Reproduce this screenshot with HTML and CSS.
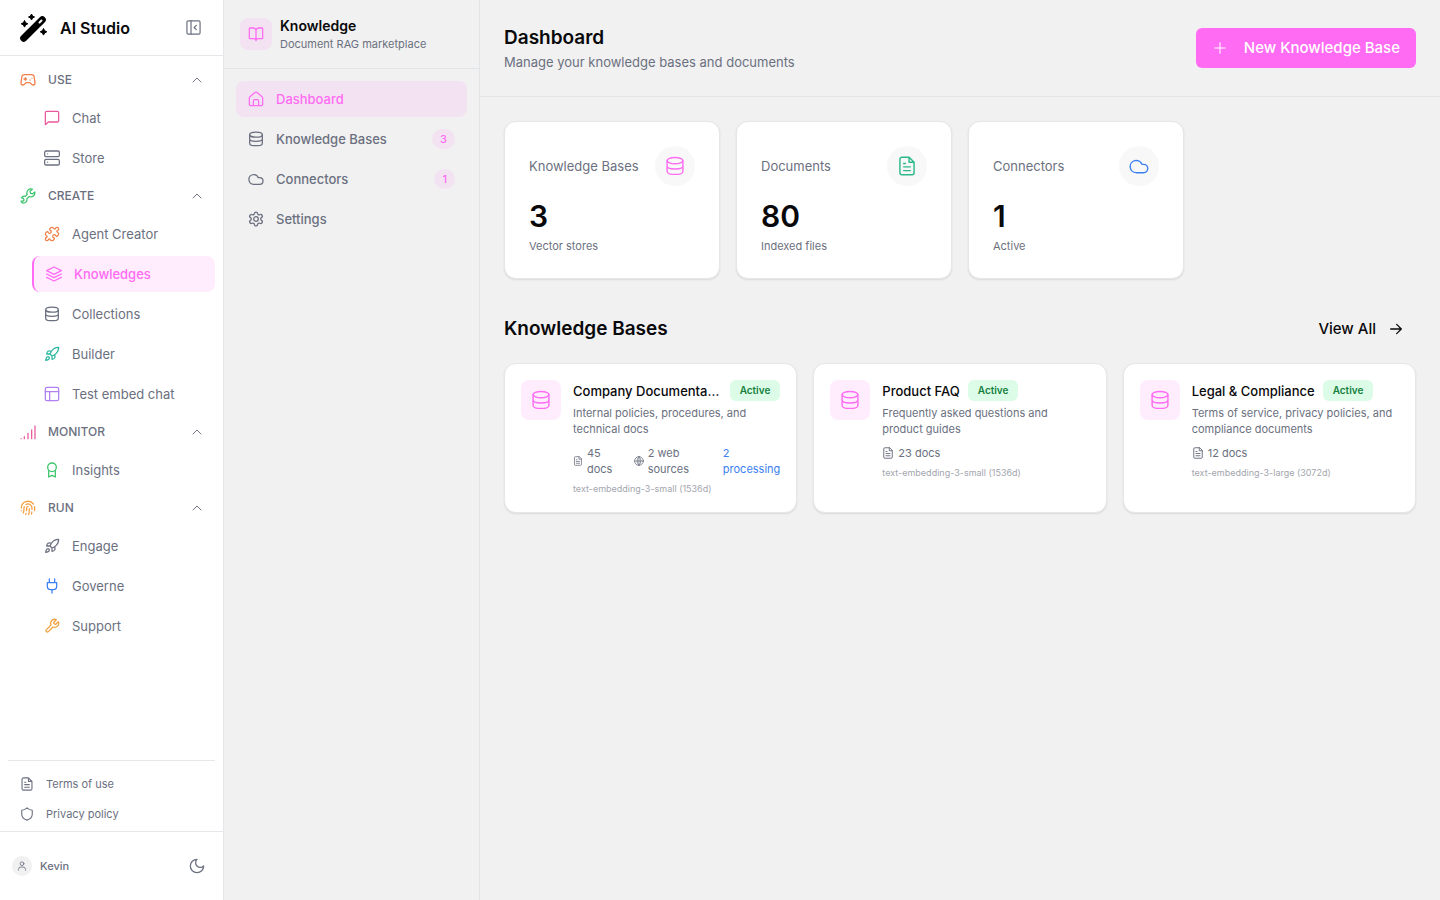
FILE: index.html
```html
<!DOCTYPE html>
<html lang="en">
<head>
    <meta charset="UTF-8">
    <meta name="viewport" content="width=device-width, initial-scale=1.0">
    <title>AI Studio - Knowledge</title>
    <link rel="stylesheet" href="styles.css">
</head>
<body>
    <svg class="sprite" aria-hidden="true">
        <symbol id="i-gamepad" viewBox="0 0 24 24"><path d="M17.32 4H6.68a4 4 0 0 0-3.978 3.59C2.604 8.416 1.5 14.456 1.5 16.5a3 3 0 0 0 3 3c1 0 1.5-.5 2-1l1.914-1.914A2 2 0 0 1 9.828 16h4.344a2 2 0 0 1 1.414.586L17.5 18.5c.5.5 1 1 2 1a3 3 0 0 0 3-3c0-2.045-1.104-8.084-1.202-8.91A4 4 0 0 0 17.32 4zM6 10.5h4M8 8.5v4M15 12h.01M18 9.5h.01"/></symbol>
        <symbol id="i-chat" viewBox="0 0 24 24"><path d="M22 16a2 2 0 0 1-2 2H6.500L2 22V4a2 2 0 0 1 2-2h16a2 2 0 0 1 2 2z"/></symbol>
        <symbol id="i-server" viewBox="0 0 24 24"><rect x="1" y="1.5" width="22" height="8.500" rx="2"/><rect x="1" y="14" width="22" height="8.500" rx="2"/><path d="M5.500 5.750h.01M5.500 18.250h.01"/></symbol>
        <symbol id="i-wrench" viewBox="0 0 24 24"><path d="M14.7 6.3a1 1 0 0 0 0 1.4l1.6 1.6a1 1 0 0 0 1.4 0l3.77-3.77a6 6 0 0 1-7.94 7.94l-6.91 6.91a2.12 2.12 0 0 1-3-3l6.91-6.91a6 6 0 0 1 7.94-7.94z"/></symbol>
        <symbol id="i-spanner" viewBox="0 0 24 24"><path d="M18.500 1.800a6 6 0 0 0-7.700 7.900L8 12.500a4.800 4.800 0 0 0-5.800 2.500l3 .7.9 2.300-1.500 1.500-3 .3c1 2.400 3.500 3.200 5.700 2.300a4.800 4.800 0 0 0 2.900-5.800l3.600-3.600a6 6 0 0 0 8.300-6.700l-3.300 2.800-3-.8-.8-3z"/></symbol>
        <symbol id="i-puzzle" viewBox="0 0 24 24"><path d="M15.39 4.39a1 1 0 0 0 1.68-.474 2.5 2.5 0 1 1 3.014 3.015 1 1 0 0 0-.474 1.68l1.683 1.682a2.414 2.414 0 0 1 0 3.414L19.61 15.39a1 1 0 0 1-1.68-.474 2.5 2.5 0 1 0-3.014 3.015 1 1 0 0 1 .474 1.68l-1.683 1.682a2.414 2.414 0 0 1-3.414 0L8.61 19.61a1 1 0 0 0-1.68.474 2.5 2.5 0 1 1-3.014-3.015 1 1 0 0 0 .474-1.68l-1.683-1.682a2.414 2.414 0 0 1 0-3.414L4.39 8.61a1 1 0 0 1 1.68.474 2.5 2.5 0 1 0 3.014-3.015 1 1 0 0 1-.474-1.68l1.683-1.682a2.414 2.414 0 0 1 3.414 0z"/></symbol>
        <symbol id="i-layers" viewBox="0 0 24 24"><path d="M12 1.500 23 7l-11 5.500L1 7zM1 12l11 5.500L23 12M1 17l11 5.500L23 17"/></symbol>
        <symbol id="i-database" viewBox="0 0 24 24"><ellipse cx="12" cy="5.500" rx="9.500" ry="3.800"/><path d="M2.500 5.500v12.500c0 2.500 3 4 6 4h7c3 0 6-1.500 6-4V5.500M2.500 12c0 2.500 4.500 3.500 9.500 3.500s9.500-1 9.500-3.500"/></symbol>
        <symbol id="i-rocket" viewBox="0 0 24 24"><path d="M4.500 16.500c-1.500 1.260-2 5-2 5s3.740-.5 5-2c.71-.84.7-2.130-.09-2.910a2.180 2.180 0 0 0-2.910-.09zM12 15l-3-3a22 22 0 0 1 2-3.950A12.880 12.880 0 0 1 22 2c0 2.720-.78 7.500-6 11a22.350 22.350 0 0 1-4 2zM9 12H4s.55-3.030 2-4c1.620-1.080 5 0 5 0M12 15v5s3.030-.55 4-2c1.080-1.620 0-5 0-5"/></symbol>
        <symbol id="i-layout" viewBox="0 0 24 24"><rect x="2" y="2" width="20" height="20" rx="2.500"/><path d="M2 8.500h20M8.500 8.500V22"/></symbol>
        <symbol id="i-signal" viewBox="0 0 24 24"><path d="M1.500 22h.01M6.500 22v-3M12 22v-8M17.500 22V9M22.500 3v19"/></symbol>
        <symbol id="i-award" viewBox="0 0 24 24"><circle cx="12" cy="8" r="6.500"/><path d="M7 13v9.500l5-2.500 5 2.500V13"/></symbol>
        <symbol id="i-fingerprint" viewBox="0 0 24 24"><path d="M12 10a2 2 0 0 0-2 2c0 1.020-.1 2.510-.26 4M14 13.120c0 2.380 0 6.380-1 8.880M17.290 21.020c.12-.6.43-2.300.5-3.020M2 12a10 10 0 0 1 18-6M2 16h.01M21.800 16c.2-2 .131-5.354 0-6M5 19.500C5.500 18 6 15 6 12a6 6 0 0 1 .34-2M8.650 22c.21-.66.45-1.320.57-2M9 6.800a6 6 0 0 1 9 5.200v2"/></symbol>
        <symbol id="i-plug" viewBox="0 0 24 24"><path d="M12 22.500v-5M8 7V1.500M16 7V1.500M5 7h14v5.500a5 5 0 0 1-5 5h-4a5 5 0 0 1-5-5z"/></symbol>
        <symbol id="i-file" viewBox="0 0 24 24"><path d="M14.500 1.500H6a2.500 2.500 0 0 0-2.500 2.500v16A2.500 2.500 0 0 0 6 22.500h12a2.500 2.500 0 0 0 2.500-2.500V7.500zM14.500 1.500v6h6M8 9h2M8 13h8M8 17.500h8"/></symbol>
        <symbol id="i-shield" viewBox="0 0 24 24"><path d="M12 22.500c5-1.500 9-4 9-10V5.500C17 5.500 14.500 4 12 1.500 9.500 4 7 5.500 3 5.500v7c0 6 4 8.500 9 10z"/></symbol>
        <symbol id="i-user" viewBox="0 0 24 24"><circle cx="12" cy="6.500" r="4.500"/><path d="M3.500 22v-1.500a6 6 0 0 1 6-6h5a6 6 0 0 1 6 6V22"/></symbol>
        <symbol id="i-moon" viewBox="0 0 24 24"><path d="M12 2a7 7 0 0 0 10 10A10 10 0 1 1 12 2z"/></symbol>
        <symbol id="i-panel" viewBox="0 0 24 24"><rect x="1.500" y="1.500" width="21" height="21" rx="2"/><path d="M8 1.500v21M16.500 8.500 13 12l3.500 3.500"/></symbol>
        <symbol id="i-chevron" viewBox="0 0 24 24"><path d="m4 16 8-8 8 8"/></symbol>
        <symbol id="i-book" viewBox="0 0 24 24"><path d="M12 7v15M12 7a4 4 0 0 0-4-4H3a1 1 0 0 0-1 1v14a1 1 0 0 0 1 1h6a3 3 0 0 1 3 3 3 3 0 0 1 3-3h6a1 1 0 0 0 1-1V4a1 1 0 0 0-1-1h-5a4 4 0 0 0-4 4z"/></symbol>
        <symbol id="i-home" viewBox="0 0 24 24"><path d="M16 22v-7a2 2 0 0 0-2-2h-4a2 2 0 0 0-2 2v7M2 10.500a2.500 2.500 0 0 1 .9-1.900l7.500-6.300a2.500 2.500 0 0 1 3.200 0l7.500 6.300a2.500 2.500 0 0 1 .9 1.900V20a2 2 0 0 1-2 2H4a2 2 0 0 1-2-2z"/></symbol>
        <symbol id="i-cloud" viewBox="0 0 24 24"><path d="M17.500 20H8.500a7.300 7.300 0 1 1 7-10h2a5 5 0 0 1 0 10z"/></symbol>
        <symbol id="i-gear" viewBox="0 0 24 24"><path d="M9.671 3.636a2.340 2.340 0 0 1 4.659 0 2.340 2.340 0 0 0 3.319 1.915 2.500 2.500 0 0 1 2.530 4.433 2.340 2.340 0 0 0 0 4.031 2.500 2.500 0 0 1-2.530 4.433 2.340 2.340 0 0 0-3.319 1.915 2.340 2.340 0 0 1-4.659 0 2.340 2.340 0 0 0-3.320-1.915 2.500 2.500 0 0 1-2.530-4.433 2.340 2.340 0 0 0 0-4.031A2.500 2.500 0 0 1 6.350 5.551a2.340 2.340 0 0 0 3.319-1.915z"/><circle cx="12" cy="12" r="3.500"/></symbol>
        <symbol id="i-globe" viewBox="0 0 24 24"><circle cx="12" cy="12" r="10.500"/><path d="M1.500 12h21M12 1.500v21M12 1.500c-6 5.500-6 15.500 0 21M12 1.500c6 5.500 6 15.500 0 21"/></symbol>
        <symbol id="i-plus" viewBox="0 0 24 24"><path d="M12 4v16M4 12h16"/></symbol>
        <symbol id="i-arrow" viewBox="0 0 24 24"><path d="M4 12h16M13 5l7 7-7 7"/></symbol>
    </svg>

    <div class="app">
        <aside class="sidebar">
            <div class="brand">
                <svg class="logo" viewBox="0 0 28 28" aria-hidden="true">
                    <path d="M3.700 24.300 22.300 5.700" stroke="#000" stroke-width="7" stroke-linecap="round"/>
                    <path d="M19.500 8.500l2-2" stroke="#fff" stroke-width="2" stroke-linecap="round"/>
                    <path d="M11.500 0l1 2 2 1-2 1-1 2-1-2-2-1 2-1zM4.500 6.500l1.100 2.200 2.200 1.100-2.200 1.100-1.100 2.200-1.100-2.200-2.200-1.100 2.200-1.100zM23.500 14.500l1.100 2.200 2.200 1.100-2.200 1.100-1.100 2.200-1.100-2.200-2.200-1.100 2.200-1.100z" fill="#000" stroke="#000" stroke-linejoin="round"/>
                </svg>
                <span class="brand-name">AI Studio</span>
                <button class="icon-button" aria-label="Collapse sidebar"><svg class="icon"><use href="#i-panel"/></svg></button>
            </div>

            <nav class="side-nav" aria-label="Main">
                <button class="group-title"><svg class="icon orange"><use href="#i-gamepad"/></svg><span>USE</span><svg class="icon chevron"><use href="#i-chevron"/></svg></button>
                <a class="side-link" href="#"><svg class="icon pink"><use href="#i-chat"/></svg>Chat</a>
                <a class="side-link" href="#"><svg class="icon"><use href="#i-server"/></svg>Store</a>

                <button class="group-title"><svg class="icon green"><use href="#i-spanner"/></svg><span>CREATE</span><svg class="icon chevron"><use href="#i-chevron"/></svg></button>
                <a class="side-link" href="#"><svg class="icon orange"><use href="#i-puzzle"/></svg>Agent Creator</a>
                <a class="side-link active" href="#"><svg class="icon"><use href="#i-layers"/></svg>Knowledges</a>
                <a class="side-link" href="#"><svg class="icon"><use href="#i-database"/></svg>Collections</a>
                <a class="side-link" href="#"><svg class="icon teal"><use href="#i-rocket"/></svg>Builder</a>
                <a class="side-link" href="#"><svg class="icon purple"><use href="#i-layout"/></svg>Test embed chat</a>

                <button class="group-title"><svg class="icon pink"><use href="#i-signal"/></svg><span>MONITOR</span><svg class="icon chevron"><use href="#i-chevron"/></svg></button>
                <a class="side-link" href="#"><svg class="icon green"><use href="#i-award"/></svg>Insights</a>

                <button class="group-title"><svg class="icon amber"><use href="#i-fingerprint"/></svg><span>RUN</span><svg class="icon chevron"><use href="#i-chevron"/></svg></button>
                <a class="side-link" href="#"><svg class="icon"><use href="#i-rocket"/></svg>Engage</a>
                <a class="side-link" href="#"><svg class="icon blue"><use href="#i-plug"/></svg>Governe</a>
                <a class="side-link" href="#"><svg class="icon amber"><use href="#i-wrench"/></svg>Support</a>
            </nav>

            <div class="legal">
                <a href="#"><svg class="icon"><use href="#i-file"/></svg>Terms of use</a>
                <a href="#"><svg class="icon"><use href="#i-shield"/></svg>Privacy policy</a>
            </div>

            <div class="account">
                <span class="avatar"><svg class="icon"><use href="#i-user"/></svg></span>
                <span class="account-name">Kevin</span>
                <button class="icon-button" aria-label="Dark mode"><svg class="icon"><use href="#i-moon"/></svg></button>
            </div>
        </aside>

        <aside class="panel">
            <div class="panel-header">
                <span class="panel-icon"><svg class="icon"><use href="#i-book"/></svg></span>
                <div>
                    <h2>Knowledge</h2>
                    <p>Document RAG marketplace</p>
                </div>
            </div>
            <nav class="panel-nav" aria-label="Knowledge">
                <a class="panel-link active" href="#"><svg class="icon"><use href="#i-home"/></svg><span>Dashboard</span></a>
                <a class="panel-link" href="#"><svg class="icon"><use href="#i-database"/></svg><span>Knowledge Bases</span><span class="count">3</span></a>
                <a class="panel-link" href="#"><svg class="icon"><use href="#i-cloud"/></svg><span>Connectors</span><span class="count">1</span></a>
                <a class="panel-link" href="#"><svg class="icon"><use href="#i-gear"/></svg><span>Settings</span></a>
            </nav>
        </aside>

        <main class="main">
            <header class="page-header">
                <div>
                    <h1>Dashboard</h1>
                    <p>Manage your knowledge bases and documents</p>
                </div>
                <button class="primary-button"><svg class="icon"><use href="#i-plus"/></svg>New Knowledge Base</button>
            </header>

            <div class="content">
                <section class="stats">
                    <div class="card stat">
                        <div class="stat-top">
                            <span>Knowledge Bases</span>
                            <span class="stat-icon brand-pink"><svg class="icon"><use href="#i-database"/></svg></span>
                        </div>
                        <p class="stat-value">3</p>
                        <p class="stat-note">Vector stores</p>
                    </div>
                    <div class="card stat">
                        <div class="stat-top">
                            <span>Documents</span>
                            <span class="stat-icon emerald"><svg class="icon"><use href="#i-file"/></svg></span>
                        </div>
                        <p class="stat-value">80</p>
                        <p class="stat-note">Indexed files</p>
                    </div>
                    <div class="card stat">
                        <div class="stat-top">
                            <span>Connectors</span>
                            <span class="stat-icon blue"><svg class="icon"><use href="#i-cloud"/></svg></span>
                        </div>
                        <p class="stat-value">1</p>
                        <p class="stat-note">Active</p>
                    </div>
                </section>

                <section>
                    <div class="section-header">
                        <h2>Knowledge Bases</h2>
                        <button class="ghost-button">View All<svg class="icon"><use href="#i-arrow"/></svg></button>
                    </div>
                    <div class="bases">
                        <article class="card base">
                            <span class="base-icon"><svg class="icon"><use href="#i-database"/></svg></span>
                            <div class="base-body">
                                <div class="base-title"><h3>Company Documentation</h3><span class="status">Active</span></div>
                                <p class="base-desc">Internal policies, procedures, and technical docs</p>
                                <div class="base-meta">
                                    <span><svg class="icon"><use href="#i-file"/></svg>45 docs</span>
                                    <span><svg class="icon"><use href="#i-globe"/></svg>2 web sources</span>
                                    <span class="blue">2 processing</span>
                                </div>
                                <p class="base-model">text-embedding-3-small (1536d)</p>
                            </div>
                        </article>
                        <article class="card base">
                            <span class="base-icon"><svg class="icon"><use href="#i-database"/></svg></span>
                            <div class="base-body">
                                <div class="base-title"><h3>Product FAQ</h3><span class="status">Active</span></div>
                                <p class="base-desc">Frequently asked questions and product guides</p>
                                <div class="base-meta">
                                    <span><svg class="icon"><use href="#i-file"/></svg>23 docs</span>
                                </div>
                                <p class="base-model">text-embedding-3-small (1536d)</p>
                            </div>
                        </article>
                        <article class="card base">
                            <span class="base-icon"><svg class="icon"><use href="#i-database"/></svg></span>
                            <div class="base-body">
                                <div class="base-title"><h3>Legal &amp; Compliance</h3><span class="status">Active</span></div>
                                <p class="base-desc">Terms of service, privacy policies, and compliance documents</p>
                                <div class="base-meta">
                                    <span><svg class="icon"><use href="#i-file"/></svg>12 docs</span>
                                </div>
                                <p class="base-model">text-embedding-3-large (3072d)</p>
                            </div>
                        </article>
                    </div>
                </section>
            </div>
        </main>
    </div>
</body>
</html>
```
FILE: styles.css
```css
* {
    box-sizing: border-box;
    margin: 0;
    padding: 0;
}

body {
    font-family: Inter, "Liberation Sans", sans-serif;
    font-size: 13px;
    line-height: 20px;
    background-color: #f1f1f1;
    color: #6b7080;
}

a {
    color: inherit;
    text-decoration: none;
}

button {
    font: inherit;
    color: inherit;
    background: none;
    border: none;
    cursor: pointer;
}

h1, h2, h3 {
    color: #09090b;
    font-weight: 600;
}

.sprite {
    display: none;
}

.icon {
    width: 16px;
    height: 16px;
    flex-shrink: 0;
    fill: none;
    stroke: currentColor;
    stroke-width: 1.9;
    stroke-linecap: round;
    stroke-linejoin: round;
}

.orange { color: #f08048; }
.pink { color: #e85a9c; }
.green { color: #3cc46c; }
.teal { color: #2cb8a0; }
.purple { color: #b080f0; }
.amber { color: #f5a040; }
.blue { color: #3b7ff0; }
.emerald { color: #2cb888; }
.brand-pink { color: #ff6bf3; }

.app {
    display: flex;
    min-height: 100vh;
}

/* Main sidebar */

.sidebar {
    display: flex;
    flex-direction: column;
    width: 224px;
    flex-shrink: 0;
    background-color: #fff;
    border-right: 1px solid #e5e7eb;
}

.brand {
    display: flex;
    align-items: center;
    gap: 12px;
    height: 56px;
    padding: 0 20px;
    border-bottom: 1px solid #e5e7eb;
}

.logo {
    width: 28px;
    height: 28px;
    fill: none;
}

.brand-name {
    flex: 1;
    font-size: 16px;
    font-weight: 600;
    color: #09090b;
}

.icon-button {
    display: flex;
    padding: 2px;
}

.brand .icon {
    width: 15px;
    height: 15px;
}

.side-nav {
    display: flex;
    flex-direction: column;
    flex: 1;
    gap: 4px;
    padding: 8px;
}

.group-title {
    display: flex;
    align-items: center;
    gap: 12px;
    height: 32px;
    padding: 0 12px;
    font-size: 12px;
    font-weight: 500;
    text-align: left;
}

.group-title span {
    flex: 1;
}

.group-title .chevron {
    width: 12px;
    height: 12px;
}

.side-link {
    display: flex;
    align-items: center;
    gap: 12px;
    height: 36px;
    margin-left: 24px;
    padding: 0 12px;
    border-radius: 8px;
}

.side-link.active {
    border-left: 2px solid #ff6bf3;
    background-color: #ffedfe;
    color: #ff6bf3;
    font-weight: 500;
}

.legal {
    margin: 0 8px;
    padding: 8px 0 2px;
    border-top: 1px solid #e5e7eb;
    font-size: 11px;
}

.legal a {
    display: flex;
    align-items: center;
    gap: 12px;
    height: 30px;
    padding: 0 12px;
}

.legal .icon {
    width: 14px;
    height: 14px;
}

.account {
    display: flex;
    align-items: center;
    gap: 8px;
    height: 69px;
    padding: 0 16px 0 12px;
    border-top: 1px solid #e5e7eb;
    font-size: 11px;
    font-weight: 500;
}

.avatar {
    display: flex;
    align-items: center;
    justify-content: center;
    width: 20px;
    height: 20px;
    border-radius: 50%;
    background-color: #f1f1f1;
}

.avatar .icon {
    width: 10px;
    height: 10px;
    stroke-width: 2;
}

.account-name {
    flex: 1;
}

/* Section panel */

.panel {
    width: 256px;
    flex-shrink: 0;
    border-right: 1px solid #e2e5e8;
}

.panel-header {
    display: flex;
    align-items: center;
    gap: 8px;
    padding: 16px;
    border-bottom: 1px solid #e2e5e8;
}

.panel-header h2 {
    font-size: 14px;
}

.panel-header p {
    font-size: 11px;
    line-height: 16px;
}

.panel-icon {
    display: flex;
    align-items: center;
    justify-content: center;
    width: 32px;
    height: 32px;
    border-radius: 8px;
    background-color: #f3e3f2;
    color: #ff6bf3;
}

.panel-nav {
    display: flex;
    flex-direction: column;
    gap: 4px;
    padding: 12px;
}

.panel-link {
    display: flex;
    align-items: center;
    gap: 12px;
    height: 36px;
    padding: 0 12px;
    border-radius: 8px;
    font-weight: 500;
}

.panel-link.active {
    background-color: #f3e3f2;
    color: #ff6bf3;
}

.count {
    margin-left: auto;
    padding: 2px 8px;
    border-radius: 10px;
    background-color: #f3e3f2;
    color: #ff6bf3;
    font-size: 11px;
    line-height: 16px;
}

/* Page */

.main {
    flex: 1;
    min-width: 0;
}

.page-header {
    display: flex;
    align-items: center;
    justify-content: space-between;
    padding: 24px;
    border-bottom: 1px solid #e2e5e8;
}

.page-header h1,
.section-header h2 {
    font-size: 19px;
    line-height: 28px;
}

.primary-button {
    display: flex;
    align-items: center;
    gap: 16px;
    height: 40px;
    padding: 0 16px;
    border-radius: 6px;
    background-color: #ff6bf3;
    color: #fff;
    font-size: 15px;
    font-weight: 500;
}

.primary-button .icon {
    stroke-width: 1.5;
}

.content {
    padding: 24px;
}

.card {
    background-color: #fff;
    border: 1px solid #e5e7eb;
    border-radius: 12px;
    box-shadow: 0 1px 2px rgba(0, 0, 0, 0.1);
}

.stats {
    display: grid;
    grid-template-columns: repeat(4, 1fr);
    gap: 16px;
    margin-bottom: 32px;
}

.stat {
    padding: 24px;
}

.stat-top {
    display: flex;
    align-items: center;
    justify-content: space-between;
    margin-bottom: 12px;
    white-space: nowrap;
}

.stat-icon {
    display: flex;
    align-items: center;
    justify-content: center;
    width: 40px;
    height: 40px;
    border-radius: 50%;
    background-color: #f8f8f8;
}

.stat-icon .icon,
.base-icon .icon {
    width: 20px;
    height: 20px;
    stroke-width: 1.7;
}

.stat-value {
    margin-bottom: 4px;
    color: #09090b;
    font-size: 30px;
    font-weight: 600;
    line-height: 36px;
}

.stat-note {
    font-size: 11px;
    line-height: 16px;
}

.section-header {
    display: flex;
    align-items: center;
    justify-content: space-between;
    margin-bottom: 16px;
}

.ghost-button {
    display: flex;
    align-items: center;
    gap: 12px;
    height: 36px;
    padding: 0 12px;
    color: #09090b;
    font-size: 15px;
    font-weight: 500;
}

.bases {
    display: grid;
    grid-template-columns: repeat(3, 1fr);
    gap: 16px;
}

.base {
    display: flex;
    align-items: flex-start;
    gap: 12px;
    min-width: 0;
    padding: 16px;
}

.base-icon {
    display: flex;
    align-items: center;
    justify-content: center;
    width: 40px;
    height: 40px;
    flex-shrink: 0;
    border-radius: 8px;
    background-color: #ffedfe;
    color: #ff6bf3;
}

.base-body {
    flex: 1;
    min-width: 0;
    font-size: 11px;
    line-height: 16px;
}

.base-title {
    display: flex;
    align-items: center;
    gap: 8px;
    margin-bottom: 4px;
}

.base-title h3 {
    overflow: hidden;
    font-size: 13px;
    font-weight: 500;
    line-height: 20px;
    text-overflow: ellipsis;
    white-space: nowrap;
}

.status {
    padding: 3px 10px;
    border-radius: 6px;
    background-color: #dcfce7;
    color: #15803d;
    font-size: 10px;
    font-weight: 600;
    line-height: 15px;
}

.base-desc {
    margin-bottom: 8px;
}

.base-meta {
    display: flex;
    gap: 12px;
    margin-bottom: 4px;
}

.base-meta span {
    display: flex;
    align-items: center;
    gap: 4px;
}

.base-meta .icon {
    width: 12px;
    height: 12px;
    flex-shrink: 1;
}

.base-model {
    color: #a3a6ae;
    font-size: 9px;
    line-height: 15px;
}
```
